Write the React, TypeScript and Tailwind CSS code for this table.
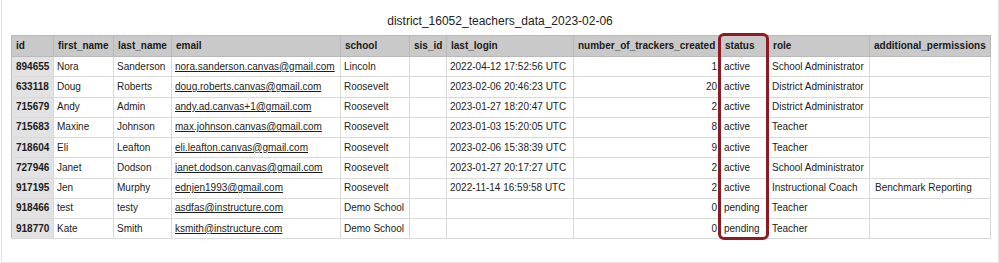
const columns = [
  { key: 'id', label: 'id', width: 42 },
  { key: 'first_name', label: 'first_name', width: 60 },
  { key: 'last_name', label: 'last_name', width: 58 },
  { key: 'email', label: 'email', width: 169 },
  { key: 'school', label: 'school', width: 69 },
  { key: 'sis_id', label: 'sis_id', width: 37 },
  { key: 'last_login', label: 'last_login', width: 127 },
  { key: 'trackers', label: 'number_of_trackers_created', width: 147 },
  { key: 'status', label: 'status', width: 48 },
  { key: 'role', label: 'role', width: 101 },
  { key: 'extra', label: 'additional_permissions', width: 121 },
];

type Row = {
  id: string;
  first: string;
  last: string;
  email: string;
  school: string;
  login: string;
  trackers: string;
  status: string;
  role: string;
  extra: string;
};

const rows: Row[] = [
  { id: '894655', first: 'Nora', last: 'Sanderson', email: 'nora.sanderson.canvas@gmail.com', school: 'Lincoln', login: '2022-04-12 17:52:56 UTC', trackers: '1', status: 'active', role: 'School Administrator', extra: '' },
  { id: '633118', first: 'Doug', last: 'Roberts', email: 'doug.roberts.canvas@gmail.com', school: 'Roosevelt', login: '2023-02-06 20:46:23 UTC', trackers: '20', status: 'active', role: 'District Administrator', extra: '' },
  { id: '715679', first: 'Andy', last: 'Admin', email: 'andy.ad.canvas+1@gmail.com', school: 'Roosevelt', login: '2023-01-27 18:20:47 UTC', trackers: '2', status: 'active', role: 'District Administrator', extra: '' },
  { id: '715683', first: 'Maxine', last: 'Johnson', email: 'max.johnson.canvas@gmail.com', school: 'Roosevelt', login: '2023-01-03 15:20:05 UTC', trackers: '8', status: 'active', role: 'Teacher', extra: '' },
  { id: '718604', first: 'Eli', last: 'Leafton', email: 'eli.leafton.canvas@gmail.com', school: 'Roosevelt', login: '2023-02-06 15:38:39 UTC', trackers: '9', status: 'active', role: 'Teacher', extra: '' },
  { id: '727946', first: 'Janet', last: 'Dodson', email: 'janet.dodson.canvas@gmail.com', school: 'Roosevelt', login: '2023-01-27 20:17:27 UTC', trackers: '2', status: 'active', role: 'School Administrator', extra: '' },
  { id: '917195', first: 'Jen', last: 'Murphy', email: 'ednjen1993@gmail.com', school: 'Roosevelt', login: '2022-11-14 16:59:58 UTC', trackers: '2', status: 'active', role: 'Instructional Coach', extra: 'Benchmark Reporting' },
  { id: '918466', first: 'test', last: 'testy', email: 'asdfas@instructure.com', school: 'Demo School', login: '', trackers: '0', status: 'pending', role: 'Teacher', extra: '' },
  { id: '918770', first: 'Kate', last: 'Smith', email: 'ksmith@instructure.com', school: 'Demo School', login: '', trackers: '0', status: 'pending', role: 'Teacher', extra: '' },
];

const cell = 'h-[20.25px] border border-[#d9d9d9] px-[3px] py-0 whitespace-nowrap overflow-hidden';

export default function App() {
  return (
    <div className="w-[999px] h-[263px] bg-white font-['Liberation_Sans',Arial,sans-serif] text-[10px] text-[#1c1c1c]">
      <div className="ml-px w-[998px] h-[263px] border-x border-b border-[#e3e3e3]">
        <div className="pt-[14px] h-[35px] text-center text-[12px] leading-[14px] text-[#222]">
          district_16052_teachers_data_2023-02-06
        </div>

        <div className="relative ml-[9px] w-[979px]">
          <table className="table-fixed border-collapse w-[979px] leading-[12px]">
            <colgroup>
              {columns.map((c) => (
                <col key={c.key} style={{ width: c.width }} />
              ))}
            </colgroup>
            <thead>
              <tr className="bg-[#c9c9c9]">
                {columns.map((c) => (
                  <th
                    key={c.key}
                    className="h-[21px] border border-[#b9b9b9] px-[4px] py-0 text-left font-bold text-[#1a1a1a] whitespace-nowrap overflow-hidden"
                  >
                    {c.label}
                  </th>
                ))}
              </tr>
            </thead>
            <tbody>
              {rows.map((r) => (
                <tr key={r.id}>
                  <td className={`${cell} bg-[#e2e2e2] border-l-[#bdbdbd] px-[4px] font-bold`}>{r.id}</td>
                  <td className={cell}>{r.first}</td>
                  <td className={cell}>{r.last}</td>
                  <td className={cell}>
                    <span className="underline underline-offset-[1px]">{r.email}</span>
                  </td>
                  <td className={cell}>{r.school}</td>
                  <td className={cell}></td>
                  <td className={cell}>{r.login}</td>
                  <td className={`${cell} text-right`}>{r.trackers}</td>
                  <td className={cell}>{r.status}</td>
                  <td className={cell}>{r.role}</td>
                  <td className={`${cell} px-[5px]`}>{r.extra}</td>
                </tr>
              ))}
            </tbody>
          </table>

          {/* highlight around the status column */}
          <div className="absolute left-[707px] top-[-2px] w-[51px] h-[207px] border-[3px] border-[#8e1b24] rounded-[6px] pointer-events-none" />
        </div>
      </div>
    </div>
  );
}
